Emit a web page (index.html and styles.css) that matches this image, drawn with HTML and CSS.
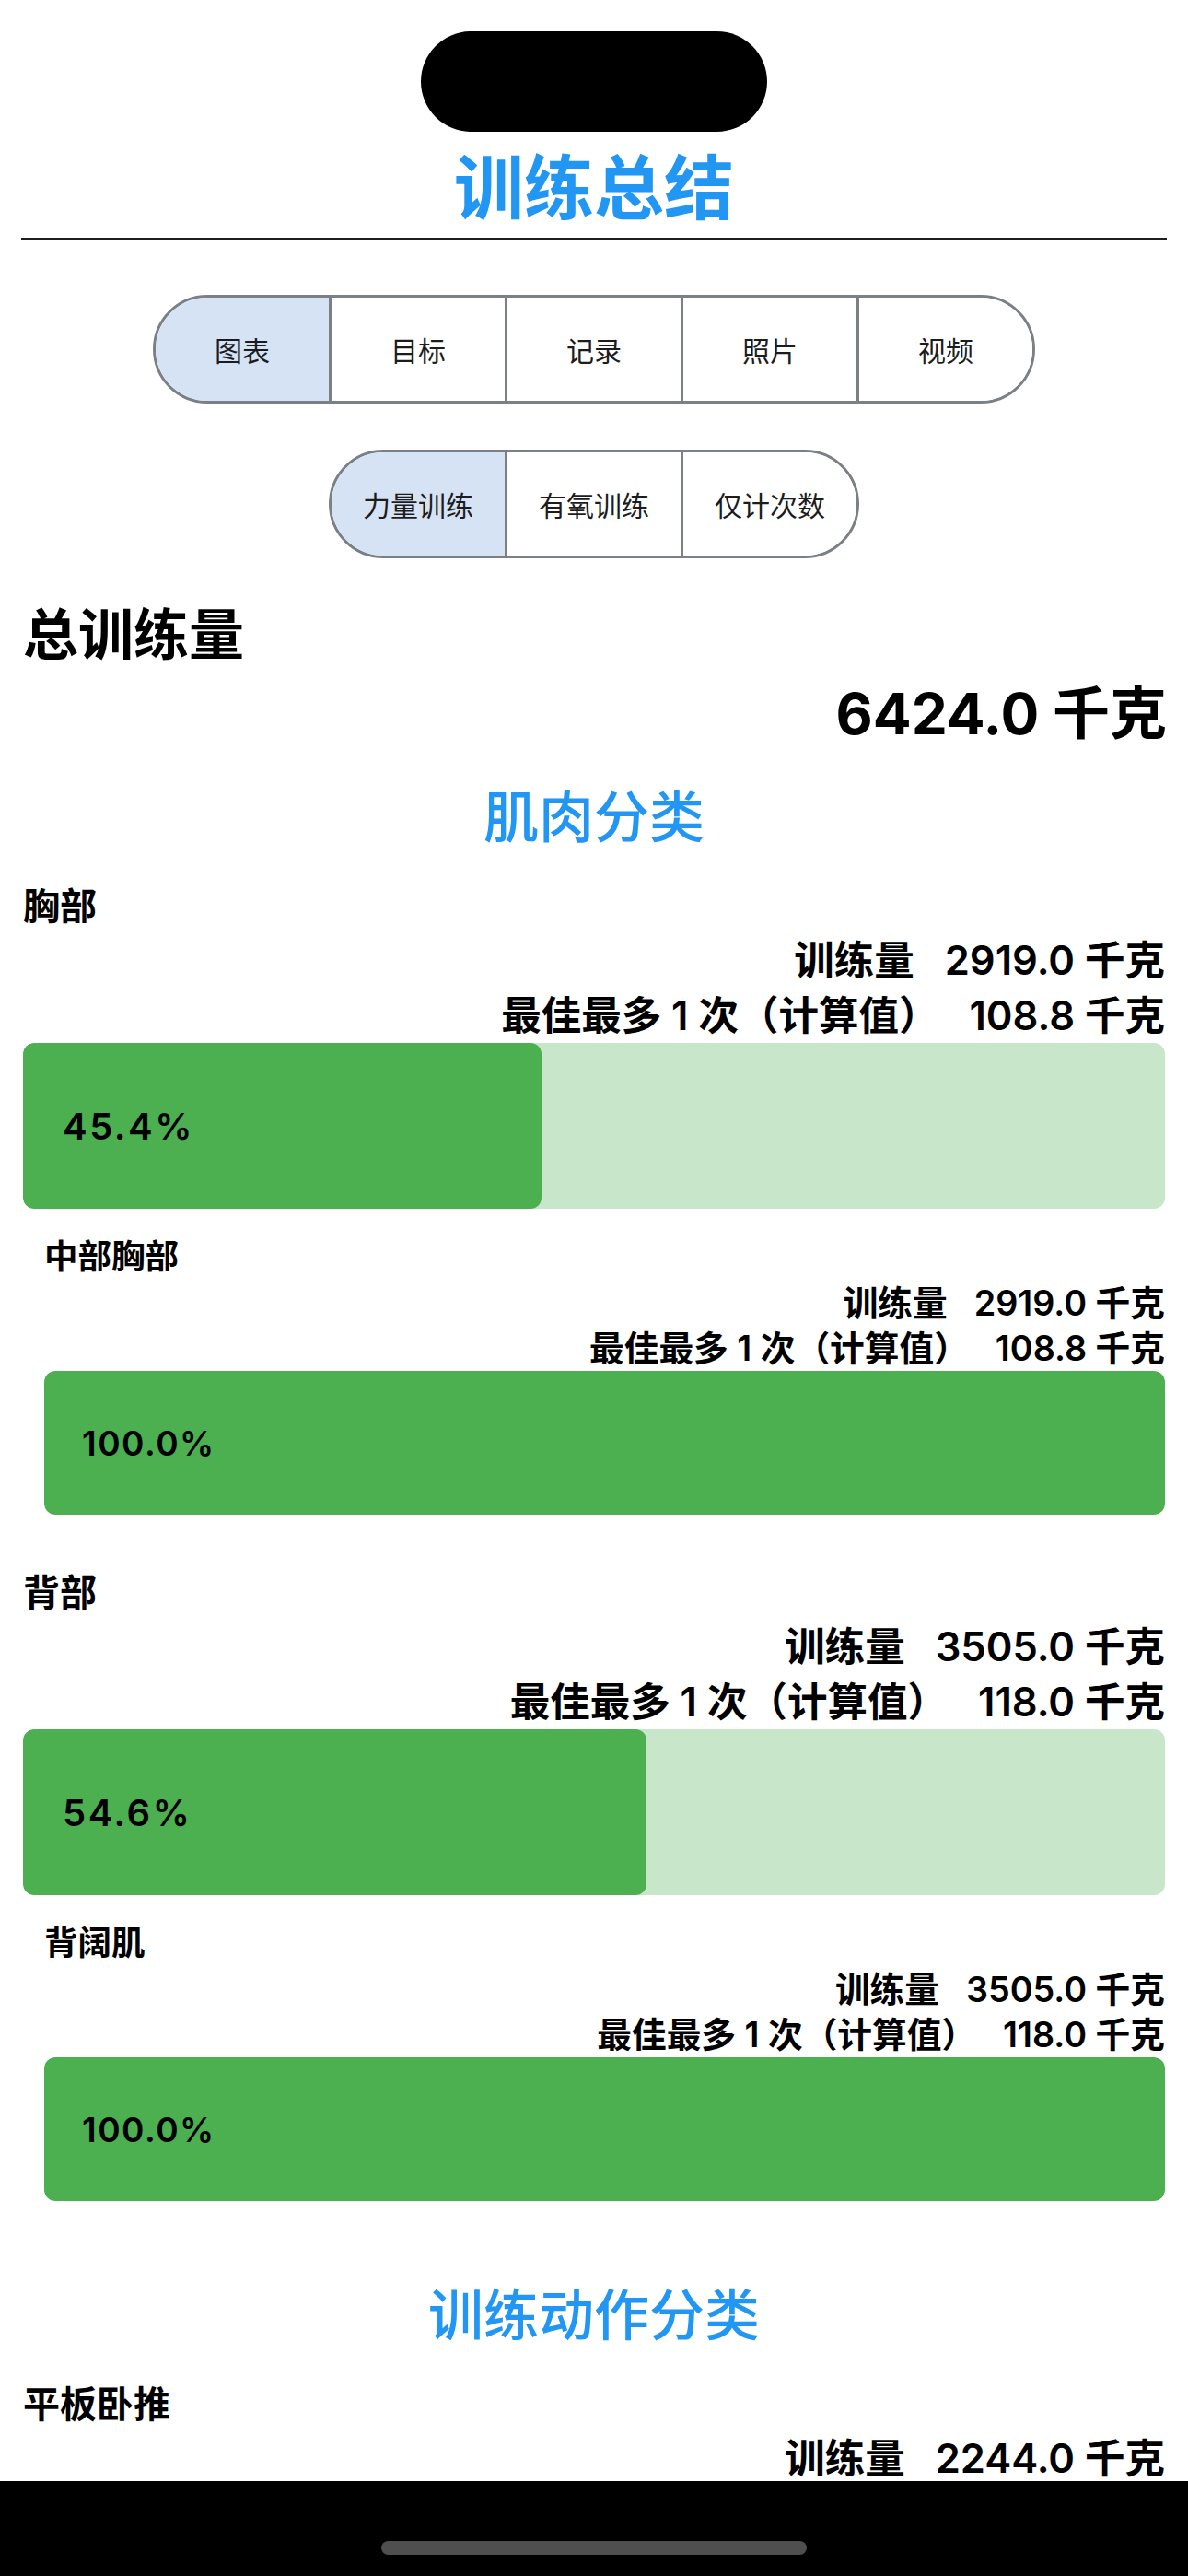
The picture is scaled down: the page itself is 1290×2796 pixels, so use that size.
FILE: index.html
```html
<!DOCTYPE html>
<html lang="zh-CN">
<head>
<meta charset="utf-8">
<title>训练总结</title>
<link rel="stylesheet" href="styles.css">
</head>
<body>
<div class="island"></div>
<main class="page">
  <h1 class="title">训练总结</h1>
  <div class="divider"></div>

  <div class="seg seg-main">
    <div class="seg-item active">图表</div>
    <div class="seg-item">目标</div>
    <div class="seg-item">记录</div>
    <div class="seg-item">照片</div>
    <div class="seg-item">视频</div>
  </div>

  <div class="seg seg-sub">
    <div class="seg-item active">力量训练</div>
    <div class="seg-item">有氧训练</div>
    <div class="seg-item">仅计次数</div>
  </div>

  <div class="total-label">总训练量</div>
  <div class="total-value">6424.0 千克</div>

  <section class="section muscle">
    <h2 class="section-title">肌肉分类</h2>

    <div class="group">
      <div class="group-label">胸部</div>
      <div class="stats">
        <div class="stat-row"><span class="stat-label">训练量</span><span class="stat-value">2919.0 千克</span></div>
        <div class="stat-row"><span class="stat-label">最佳最多 1 次（计算值）</span><span class="stat-value">108.8 千克</span></div>
      </div>
      <div class="bar">
        <div class="bar-fill" style="width:45.4%"></div>
        <div class="bar-text">45.4%</div>
      </div>
      <div class="sub">
        <div class="sub-label">中部胸部</div>
        <div class="stats">
          <div class="stat-row"><span class="stat-label">训练量</span><span class="stat-value">2919.0 千克</span></div>
          <div class="stat-row"><span class="stat-label">最佳最多 1 次（计算值）</span><span class="stat-value">108.8 千克</span></div>
        </div>
        <div class="bar">
          <div class="bar-fill" style="width:100%"></div>
          <div class="bar-text">100.0%</div>
        </div>
      </div>
    </div>

    <div class="group">
      <div class="group-label">背部</div>
      <div class="stats">
        <div class="stat-row"><span class="stat-label">训练量</span><span class="stat-value">3505.0 千克</span></div>
        <div class="stat-row"><span class="stat-label">最佳最多 1 次（计算值）</span><span class="stat-value">118.0 千克</span></div>
      </div>
      <div class="bar">
        <div class="bar-fill" style="width:54.6%"></div>
        <div class="bar-text">54.6%</div>
      </div>
      <div class="sub">
        <div class="sub-label">背阔肌</div>
        <div class="stats">
          <div class="stat-row"><span class="stat-label">训练量</span><span class="stat-value">3505.0 千克</span></div>
          <div class="stat-row"><span class="stat-label">最佳最多 1 次（计算值）</span><span class="stat-value">118.0 千克</span></div>
        </div>
        <div class="bar">
          <div class="bar-fill" style="width:100%"></div>
          <div class="bar-text">100.0%</div>
        </div>
      </div>
    </div>
  </section>

  <section class="section exercise">
    <h2 class="section-title">训练动作分类</h2>
    <div class="group">
      <div class="group-label">平板卧推</div>
      <div class="stats">
        <div class="stat-row"><span class="stat-label">训练量</span><span class="stat-value">2244.0 千克</span></div>
      </div>
    </div>
  </section>
</main>
<div class="home-bar"><div class="home-indicator"></div></div>
</body>
</html>
```
FILE: styles.css
```css
html, body {
  margin: 0;
  padding: 0;
  background: #ffffff;
  overflow: hidden;
}

body {
  font-family: Inter, "Noto Sans CJK SC", sans-serif;
  color: #000000;
  width: 1290px;
  height: 2796px;
  position: relative;
}

.island {
  position: absolute;
  top: 34px;
  left: 457px;
  width: 376px;
  height: 109px;
  border-radius: 55px;
  background: #000000;
}

.page {
  padding: 158px 25px 0;
}

.title {
  margin: 0;
  font-size: 76px;
  line-height: 92px;
  font-weight: 700;
  color: #2196f3;
  text-align: center;
}

.divider {
  height: 2px;
  background: #1e1e1e;
  margin: 8px -2px 0;
}

.seg {
  display: flex;
  width: max-content;
  margin: 60px auto 0;
  border: 3px solid #7b8087;
  border-radius: 60px;
  overflow: hidden;
}

.seg-sub {
  margin-top: 50px;
}

.seg-item {
  width: 188px;
  height: 112px;
  display: flex;
  align-items: center;
  justify-content: center;
  font-size: 30px;
  color: #1c1c1e;
  background: #ffffff;
}

.seg-item + .seg-item {
  border-left: 3px solid #7b8087;
}

.seg-item.active {
  background: #d5e3f5;
}

.total-label {
  margin-top: 47px;
  font-size: 60px;
  line-height: 72px;
  font-weight: 700;
}

.total-value {
  margin-top: 12px;
  font-size: 62px;
  line-height: 76px;
  font-weight: 700;
  text-align: right;
  margin-right: -2px;
}

.section-title {
  margin: 0;
  font-size: 60px;
  line-height: 72px;
  font-weight: 500;
  color: #2196f3;
  text-align: center;
}

.muscle .section-title {
  margin-top: 38px;
}

.exercise .section-title {
  margin-top: 88px;
}

.section-title + .group {
  margin-top: 37px;
}

.group + .group {
  margin-top: 61px;
}

.group-label {
  font-size: 40px;
  line-height: 48px;
  font-weight: 700;
}

.stats {
  margin-top: 4px;
  display: flex;
  flex-direction: column;
}

.stat-row {
  display: flex;
  justify-content: flex-end;
  gap: 33px;
  font-size: 43.5px;
  line-height: 60px;
  font-weight: 600;
}

.bar {
  display: grid;
  height: 180px;
  border-radius: 12px;
  background: #c8e6c9;
  overflow: hidden;
}

.bar-fill,
.bar-text {
  grid-area: 1 / 1;
}

.bar-fill {
  height: 100%;
  background: #4caf50;
  border-radius: 12px;
}

.bar-text {
  align-self: center;
  padding-left: 43px;
  font-size: 40px;
  font-weight: 600;
  letter-spacing: 2.5px;
  color: #000000;
}

.sub {
  margin-left: 23px;
  margin-top: 31px;
}

.sub-label {
  font-size: 36.5px;
  line-height: 42px;
  font-weight: 600;
}

.sub .stats {
  margin-top: 5px;
}

.sub .stat-row {
  font-size: 37.7px;
  line-height: 49px;
  gap: 29px;
}

.sub .bar {
  height: 156px;
}

.sub .bar-text {
  padding-left: 41px;
  font-size: 37px;
  letter-spacing: 1.5px;
}

.home-bar {
  position: fixed;
  left: 0;
  right: 0;
  bottom: 0;
  height: 103px;
  background: #000000;
  display: flex;
  justify-content: center;
}

.home-indicator {
  margin-top: 65px;
  width: 462px;
  height: 15px;
  border-radius: 8px;
  background: #4f4f4f;
}
```
